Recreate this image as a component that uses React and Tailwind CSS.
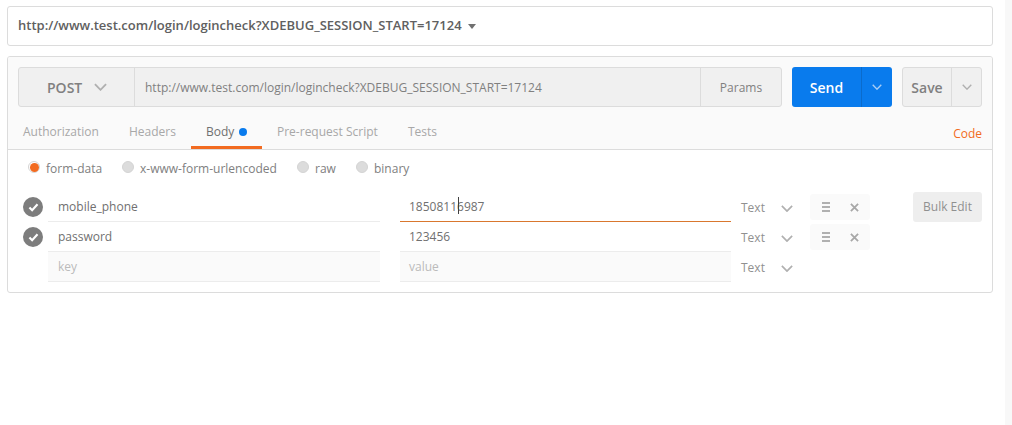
const tabs = [
	{ label: "Authorization", className: "w-[111px] pl-[5px]" },
	{ label: "Headers", className: "w-[62px]" },
];

const Chevron = ({ className }) => (
	<svg viewBox="0 0 14 8" className={className} fill="none" stroke="currentColor" strokeWidth="2">
		<path d="M1 1l6 6 6-6" />
	</svg>
);

const CheckMark = () => (
	<svg viewBox="0 0 12 10" className="w-[11px] h-[9px]" fill="none" stroke="white" strokeWidth="2.4">
		<path d="M1.5 5l3 3 6-6.5" />
	</svg>
);

const CloseMark = () => (
	<svg viewBox="0 0 10 10" className="w-[9px] h-[9px]" fill="none" stroke="#a8a8a8" strokeWidth="2">
		<path d="M1 1l8 8M9 1l-8 8" />
	</svg>
);

const Radio = ({ label, active, className }) => (
	<div className={`flex items-center ${className}`}>
		<span className={`w-[12px] h-[12px] rounded-full border border-[#d4d4d4] flex items-center justify-center mb-[4px] ${active ? "bg-white" : "bg-[#dcdcdc]"}`}>
			{active && <span className="w-[9px] h-[9px] rounded-full bg-[#f26b21]" />}
		</span>
		<span className="ml-[6px] text-[12px] text-[#808080]">{label}</span>
	</div>
);

const TypeSelect = () => (
	<div className="w-[79px] pl-[10px] pt-[2px] flex items-center text-[12px] text-[#909090]">
		<span className="w-[40px]">Text</span>
		<Chevron className="w-[12px] h-[7px] text-[#b0b0b0]" />
	</div>
);

const Row = ({ name, value, focused, placeholder, bulk }) => (
	<div className="flex h-[30px]">
		<div className="w-[40px] flex items-center justify-center pl-[10px]">
			{!placeholder && (
				<span className="w-[20px] h-[20px] rounded-full bg-[#7d7d7d] flex items-center justify-center">
					<CheckMark />
				</span>
			)}
		</div>
		<div className={`w-[332px] px-[10px] pt-[1px] flex items-center text-[12px] border-b border-[#ececec] ${placeholder ? "bg-[#fafafa] text-[#bbbbbb]" : "text-[#707070]"}`}>
			{name}
		</div>
		<div className={`w-[331px] ml-[20px] px-[9px] pt-[1px] flex items-center text-[12px] border-b ${focused ? "border-[#d9772e]" : "border-[#ececec]"} ${placeholder ? "bg-[#fafafa] text-[#bbbbbb]" : "text-[#707070]"}`}>
			{value}
		</div>
		<TypeSelect />
		{!placeholder && (
			<div className="w-[60px] h-[26px] mt-[2px] bg-[#fafafa] rounded-[3px] flex items-center">
				<span className="w-[40px] pl-[12px] flex flex-col items-start gap-[2px]">
					<span className="w-[8px] h-[2px] bg-[#b0b0b0]" />
					<span className="w-[8px] h-[2px] bg-[#b0b0b0]" />
					<span className="w-[8px] h-[2px] bg-[#b0b0b0]" />
				</span>
				<CloseMark />
			</div>
		)}
		{bulk && (
			<button className="ml-[43px] w-[69px] h-[30px] bg-[#eeeeee] rounded-[3px] text-[12px] text-[#909090]">
				Bulk Edit
			</button>
		)}
	</div>
);

export default function App() {
	return (
		<div className="relative w-[1012px] h-[425px] bg-white overflow-hidden pt-[6px] pl-[7px] font-['Open_Sans',sans-serif]">
			<div className="absolute top-0 right-0 w-[7px] h-full bg-[#f8f8f8]" />

			<div className="w-[986px] h-[40px] border border-[#dcdcdc] rounded-[3px] flex items-center pl-[10px] text-[13px] font-semibold text-[#606060]">
				http://www.test.com/login/logincheck?XDEBUG_SESSION_START=17124
				<span className="ml-[6px] w-0 h-0 border-x-[4px] border-x-transparent border-t-[5px] border-t-[#707070]" />
			</div>

			<div className="w-[986px] h-[237px] mt-[10px] border border-[#dcdcdc] rounded-[3px] overflow-hidden">
				<div className="h-[93px] bg-[#fafafa] border-b border-[#dcdcdc] px-[10px] pt-[10px]">
					<div className="flex h-[40px]">
						<div className="flex flex-1 bg-[#f0f0f0] border border-[#dcdcdc] rounded-[3px] text-[12px] text-[#808080]">
							<div className="w-[116px] border-r border-[#dcdcdc] flex items-center pl-[28px] text-[14px] font-semibold text-[#808080]">
								POST
								<Chevron className="ml-[12px] w-[13px] h-[8px] text-[#b0b0b0]" />
							</div>
							<div className="flex-1 flex items-center pl-[10px] pt-[1px]">
								http://www.test.com/login/logincheck?XDEBUG_SESSION_START=17124
							</div>
							<div className="w-[81px] border-l border-[#dcdcdc] flex items-center justify-center pt-[1px]">Params</div>
						</div>
						<div className="ml-[10px] w-[100px] flex bg-[#097bed] rounded-[3px] text-white">
							<div className="w-[70px] border-r border-[#0a6bcc] flex items-center justify-center text-[14px] font-semibold">Send</div>
							<div className="flex-1 flex items-center justify-center">
								<Chevron className="w-[10px] h-[6px] text-[#a8cdf5]" />
							</div>
						</div>
						<div className="ml-[10px] w-[80px] flex bg-[#f0f0f0] border border-[#dcdcdc] rounded-[3px]">
							<div className="w-[49px] border-r border-[#dcdcdc] flex items-center justify-center text-[14px] font-semibold text-[#808080]">Save</div>
							<div className="flex-1 flex items-center justify-center">
								<Chevron className="w-[10px] h-[6px] text-[#b0b0b0]" />
							</div>
						</div>
					</div>

					<div className="flex h-[42px] pt-[8px] text-[12px] text-[#a8a8a8]">
						{tabs.map((t) => (
							<div key={t.label} className={`${t.className} flex items-center`}>{t.label}</div>
						))}
						<div className="w-[71px] h-[34px] border-b-[3px] border-[#f26b21] flex items-center pl-[15px] pt-[3px] text-[#707070]">
							Body
							<span className="ml-[5px] w-[8px] h-[8px] rounded-full bg-[#097bed]" />
						</div>
						<div className="w-[146px] pl-[15px] flex items-center">Pre-request Script</div>
						<div className="flex items-center">Tests</div>
						<div className="ml-auto flex items-center pt-[4px] text-[#f26b21]">Code</div>
					</div>
				</div>

				<div className="flex h-[36px] items-center pl-[20px] pt-[2px]">
					<Radio label="form-data" active className="w-[94px]" />
					<Radio label="x-www-form-urlencoded" className="w-[175px]" />
					<Radio label="raw" className="w-[59px]" />
					<Radio label="binary" />
				</div>

				<div className="pt-[6px]">
					<Row
						name="mobile_phone"
						focused
						bulk
						value={
							<span className="relative">
								1850811<span className="absolute top-[-1px] left-[49px] w-px h-[17px] bg-[#404040]" />6987
							</span>
						}
					/>
					<Row name="password" value="123456" />
					<Row name="key" value="value" placeholder />
				</div>
			</div>
		</div>
	);
}
